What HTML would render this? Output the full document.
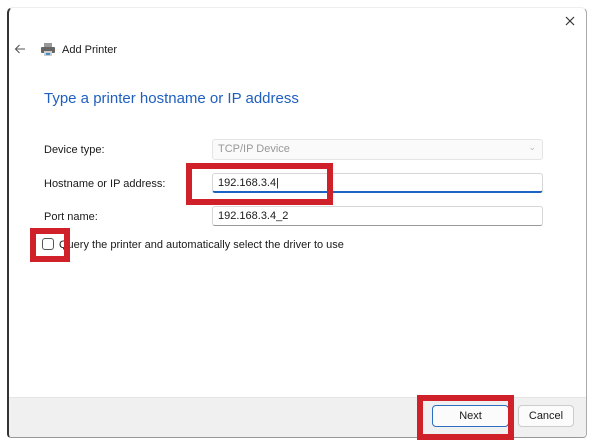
<!DOCTYPE html>
<html><head><style>
body{margin:0;width:600px;height:447px;background:#fff;position:relative;overflow:hidden;font-family:"Liberation Sans",sans-serif;font-size:11px;color:#1a1a1a}
.a{position:absolute}
.win{left:7px;top:7px;width:577px;height:429px;border-left:2px solid #333;border-right:1px solid #aaa;border-bottom:1px solid #999;border-top:1px solid #eee;border-radius:6px 6px 4px 4px;background:#fff;overflow:hidden}
.foot{left:0;right:0;bottom:0;height:39px;background:#f0f0f0;border-top:1px solid #e4e4e4}
.fld{border:1px solid #d6d6d6;border-bottom-color:#999;border-radius:3px;background:#fff;height:20px;box-sizing:border-box;padding:3px 5px}
.red{border:6px solid #d0212b;box-sizing:border-box}
.btn{border:1px solid #ccc;border-radius:4px;background:#fbfbfb;text-align:center;line-height:20px;box-sizing:border-box;height:22px}
</style></head><body>
<div class="a win">
 <div class="a foot"></div>
</div>
<svg class="a" style="left:565px;top:16px" width="10" height="10" viewBox="0 0 10 10"><path d="M1 1L9 9M9 1L1 9" stroke="#333" stroke-width="1.2"/></svg>
<svg class="a" style="left:14px;top:44px" width="12" height="10" viewBox="0 0 12 10"><path d="M11 5H1.5M5.5 1L1.5 5L5.5 9" stroke="#555" stroke-width="1.1" fill="none"/></svg>
<svg class="a" style="left:41px;top:43px" width="14" height="13" viewBox="0 0 14 13"><rect x="3" y="0" width="8" height="4" fill="#999"/><rect x="0" y="4" width="14" height="6" rx="1" fill="#666"/><rect x="3" y="8" width="8" height="5" fill="#ccc"/><rect x="5" y="10" width="4" height="2" fill="#3a8fd0"/></svg>
<div class="a" style="left:62px;top:44px;font-size:11px">Add Printer</div>
<div class="a" style="left:44px;top:90px;font-size:15px;color:#1f5fbf">Type a printer hostname or IP address</div>
<div class="a" style="left:44px;top:144px">Device type:</div>
<div class="a fld" style="left:212px;top:139px;width:331px;height:21px;background:#fafafa;border-color:#e5e5e5;color:#999">TCP/IP Device<span style="position:absolute;right:6px;top:2px;color:#bbb;font-size:9px">⌄</span></div>
<div class="a" style="left:44px;top:178px">Hostname or IP address:</div>
<div class="a fld" style="left:212px;top:173px;width:331px;border-bottom:2px solid #1b64c4">192.168.3.4|</div>
<div class="a" style="left:44px;top:211px">Port name:</div>
<div class="a fld" style="left:212px;top:206px;width:331px">192.168.3.4_2</div>
<div class="a" style="left:42px;top:238px;width:12px;height:12px;border:1px solid #555;border-radius:3px;box-sizing:border-box;background:#fff"></div>
<div class="a" style="left:59px;top:239px">Query the printer and automatically select the driver to use</div>
<div class="a btn" style="left:432px;top:405px;width:77px;border:1px solid #2b6fc2">Next</div>
<div class="a btn" style="left:518px;top:405px;width:56px">Cancel</div>
<div class="a red" style="left:186px;top:163px;width:147px;height:42px"></div>
<div class="a red" style="left:30px;top:228px;width:40px;height:34px"></div>
<div class="a red" style="left:417px;top:395px;width:97px;height:45px"></div>
</body></html>
